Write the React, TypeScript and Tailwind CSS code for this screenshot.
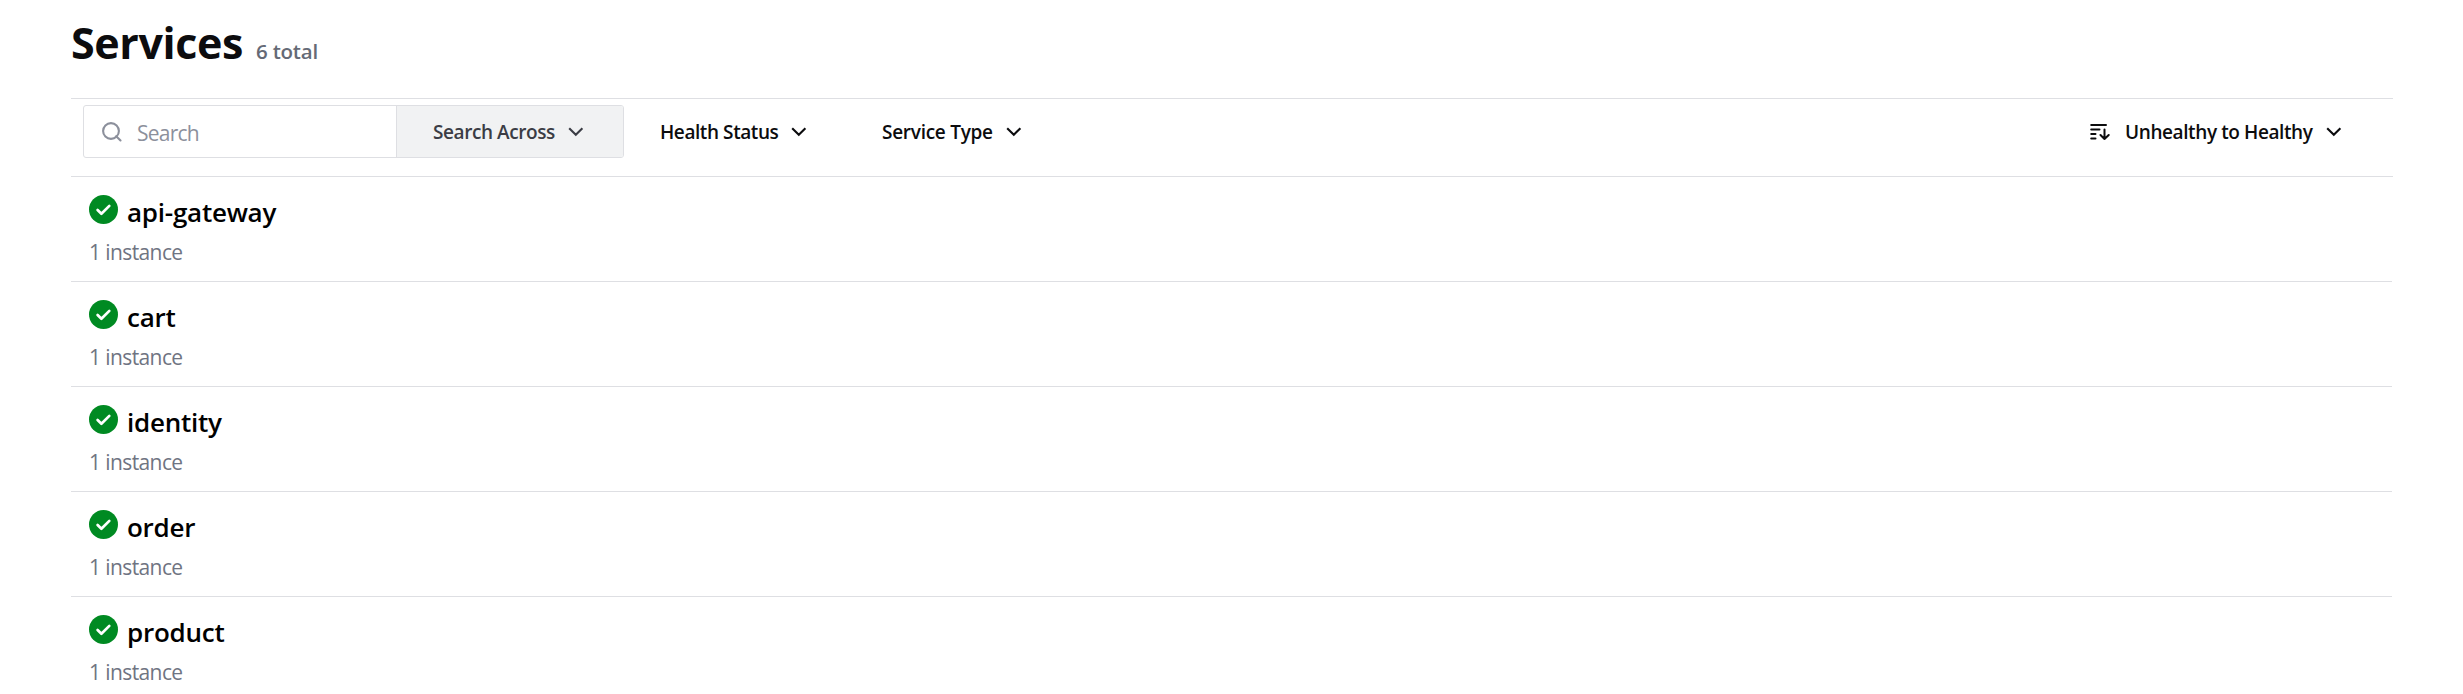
import React from 'react';

const services = ['api-gateway', 'cart', 'identity', 'order', 'product'];

function Chevron({ className = '' }: { className?: string }) {
  return (
    <svg className={`h-[10px] w-[16px] shrink-0 ${className}`} viewBox="0 0 16 10" fill="none" stroke="currentColor" strokeWidth="2.1">
      <path d="M1.2 1.2 7.8 7.8 14.4 1.2" />
    </svg>
  );
}

function SearchIcon() {
  return (
    <svg className="h-5 w-5 shrink-0" viewBox="0 0 20 20" fill="none" stroke="currentColor" strokeWidth="2.1">
      <circle cx="9" cy="9" r="7.9" />
      <path d="M14.2 14.2 18.5 18.5" strokeLinecap="round" />
    </svg>
  );
}

function SortIcon() {
  return (
    <svg className="h-[18px] w-[20px] shrink-0" viewBox="0 0 20 18" fill="none" stroke="currentColor" strokeWidth="2" strokeLinecap="round" strokeLinejoin="round">
      <path d="M1.2 2H16M1.2 6.5H9.5M1.2 11H5.5M1.2 15.5H5.5M14.5 6.5V16M10.5 12 14.5 16 18.7 12" />
    </svg>
  );
}

function HealthyIcon() {
  return (
    <svg className="h-[29px] w-[29px] shrink-0" viewBox="0 0 29 29">
      <circle cx="14.5" cy="14.5" r="14.5" fill="#008a22" />
      <path d="M8.6 15 12.4 18.8 20.3 10.9" fill="none" stroke="#fff" strokeWidth="2.7" strokeLinecap="round" strokeLinejoin="round" />
    </svg>
  );
}

export default function App() {
  return (
    <div className="h-[694px] w-full overflow-hidden bg-white pl-[71px] pr-[70px] font-['Open_Sans','Noto_Sans',sans-serif] text-[#0c0c0e]">
      <header className="flex h-[98px] items-baseline pt-[13px]">
        <h1 className="w-[185px] whitespace-nowrap text-[43px] font-bold leading-[60px] tracking-[-0.4px]">Services</h1>
        <span className="whitespace-nowrap text-[20.5px] font-semibold leading-[30px] tracking-[-0.2px] text-[#656a76]">6 total</span>
      </header>

      <div className="flex h-[79px] border-y border-[#dedfe3] pl-3 pt-[6px]">
        <div className="flex h-[53px] w-[541px] overflow-hidden rounded-[3px] border border-[#dedfe3]">
          <div className="flex w-[313px] items-center border-r border-[#dedfe3] pl-[18px] text-[#8c909c]">
            <SearchIcon />
            <span className="ml-[15px] pt-[3px] text-[21px] leading-[30px] tracking-[-0.75px]">Search</span>
          </div>
          <button className="flex flex-1 items-center bg-[#f1f2f3] pl-9 text-[#3b3d45]">
            <span className="w-[135px] whitespace-nowrap text-left text-[19px] font-semibold leading-[28px] tracking-[-0.42px]">Search Across</span>
            <Chevron />
          </button>
        </div>
        <button className="ml-9 flex h-[53px] items-center">
          <span className="w-[131px] whitespace-nowrap text-left text-[19px] font-semibold leading-[28px] tracking-[-0.42px]">Health Status</span>
          <Chevron />
        </button>
        <button className="ml-[75px] flex h-[53px] items-center">
          <span className="w-[124px] whitespace-nowrap text-left text-[19px] font-semibold leading-[28px] tracking-[-0.27px]">Service Type</span>
          <Chevron />
        </button>
        <button className="ml-auto mr-[51px] flex h-[53px] items-center">
          <SortIcon />
          <span className="ml-[15px] w-[201px] whitespace-nowrap text-left text-[19px] font-semibold leading-[28px] tracking-[-0.4px]">Unhealthy to Healthy</span>
          <Chevron />
        </button>
      </div>

      <ul className="mr-px">
        {services.map((name) => (
          <li key={name} className="h-[105px] border-b border-[#dedfe3] pl-[18px] pt-[18px]">
            <div className="flex h-[42px] items-start">
              <HealthyIcon />
              <h2 className="ml-[9px] text-[26px] font-semibold leading-[34px] tracking-[-0.25px] text-black">{name}</h2>
            </div>
            <p className="text-[21px] leading-[30px] tracking-[-0.6px] text-[#6f7482]">1 instance</p>
          </li>
        ))}
      </ul>
    </div>
  );
}
